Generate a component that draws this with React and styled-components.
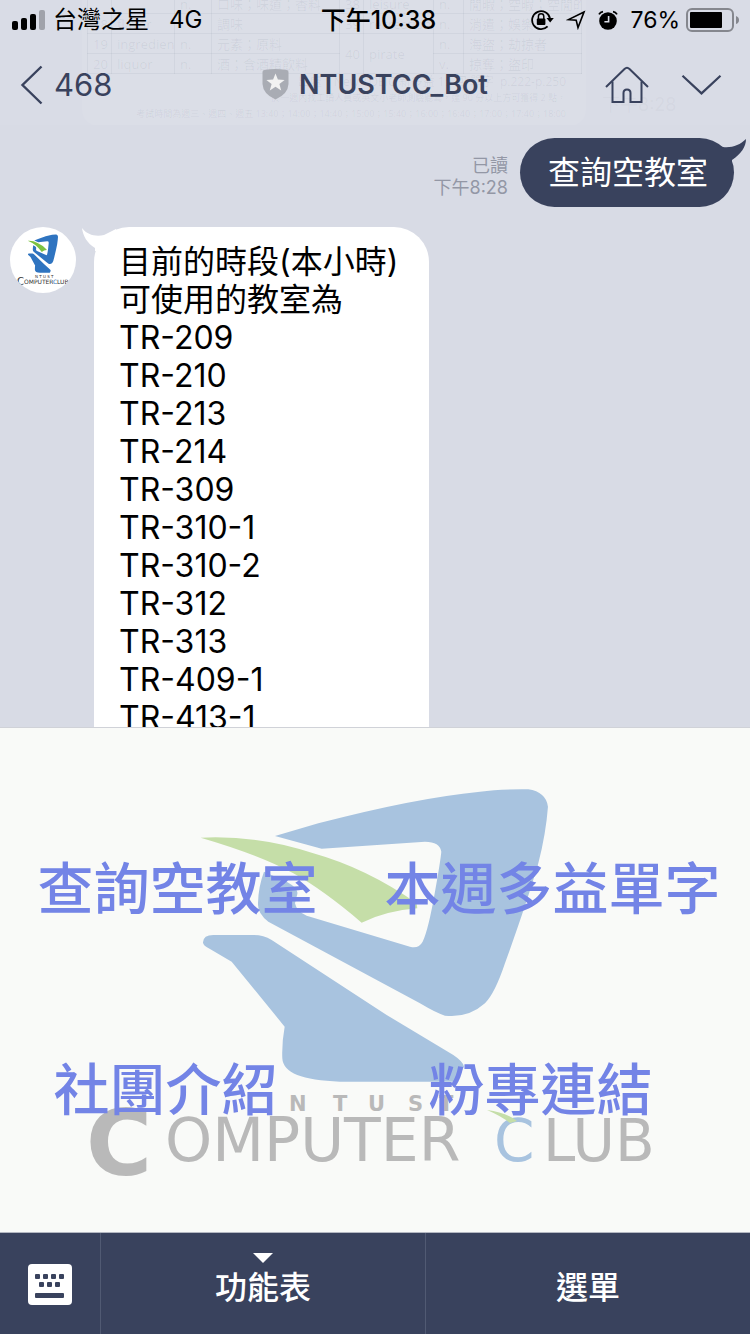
import React from "react";
import styled, { createGlobalStyle, css } from "styled-components";

const ink = "#39425d";
const sans = `Inter, "Noto Sans CJK TC", sans-serif`;

const GlobalStyle = createGlobalStyle`
  * { box-sizing: border-box; }
  body { margin: 0; background: #d8dbe5; font-family: ${sans}; }
  button { font: inherit; color: inherit; background: none; border: 0; padding: 0; margin: 0; cursor: pointer; }
  svg { display: block; flex: none; }
  h1, p { margin: 0; font-weight: inherit; }
`;

const Screen = styled.div`
  display: flex;
  flex-direction: column;
  height: 100vh;
  overflow: hidden;
`;

/* ---------- header ---------- */

const Header = styled.header`
  position: relative;
  flex: none;
  height: 125px;
  background: #d9dce6;
`;

const StatusBar = styled.div`
  position: relative;
  display: grid;
  grid-template-columns: 1fr auto 1fr;
  align-items: center;
  height: 40px;
  padding: 0 11px 0 12px;
  font-size: 24px;
  line-height: 40px;
  color: #000;
`;

const StatusGroup = styled.div`
  display: flex;
  align-items: center;
  gap: ${(p) => p.$gap}px;
  justify-content: ${(p) => (p.$end ? "flex-end" : "flex-start")};
`;

const Carrier = styled.span`
  margin-right: 12px;
`;

const Clock = styled.time`
  margin-left: 6px;
  font-size: 25px;
  font-weight: 500;
`;

const Percent = styled.span`
  font-size: 23px;
`;

const NavBar = styled.nav`
  position: relative;
  display: grid;
  grid-template-columns: 1fr auto 1fr;
  align-items: center;
  height: 85px;
  padding: 4px 28px 0;
  color: ${ink};
`;

const BackButton = styled.button`
  display: flex;
  align-items: center;
  gap: 10px;
  justify-self: start;
  margin-left: -8px;
  font-size: 31px;
`;

const Title = styled.h1`
  display: flex;
  align-items: center;
  gap: 10px;
  font-size: 27px;
  font-weight: 600;
`;

const NavActions = styled.div`
  display: flex;
  align-items: center;
  justify-content: flex-end;
  gap: 32px;
`;

/* ---------- scrolled message that shows faintly through the header ---------- */

const Underlay = styled.div`
  position: absolute;
  inset: 0;
  overflow: hidden;
  color: rgba(40, 50, 80, 0.07);
`;

const UnderCard = styled.div`
  position: absolute;
  left: 82px;
  top: -7px;
  width: 504px;
  padding: 0 5px 4px;
  border-radius: 0 0 16px 16px;
  background: rgba(255, 255, 255, 0.06);
  font-size: 13px;
  line-height: 16px;
`;

const UnderTable = styled.table`
  width: 100%;
  table-layout: fixed;
  border-collapse: collapse;
  font-family: "Open Sans", "Noto Sans CJK TC", sans-serif;
  td { height: 20px; padding: 0 5px; border: 1px solid rgba(40, 50, 80, 0.05); white-space: nowrap; overflow: hidden; }
`;

const UnderLine = styled.p`
  padding-right: 15px;
  text-align: right;
  white-space: nowrap;
  font-family: "Open Sans", "Noto Sans CJK TC", sans-serif;
  font-size: ${(p) => p.$size}px;
`;

const UnderTime = styled.span`
  position: absolute;
  left: 602px;
  top: 94px;
  font-size: 18px;
  line-height: 22px;
  opacity: 0.4;
`;

/* ---------- conversation ---------- */

const Chat = styled.main`
  flex: 1;
  min-height: 0;
  overflow: hidden;
  display: flex;
  flex-direction: column;
  gap: 20px;
  padding: 13px 16px 0 10px;
`;

const Row = styled.div`
  flex: none;
  display: flex;
  align-items: ${(p) => (p.$sent ? "flex-end" : "flex-start")};
  justify-content: ${(p) => (p.$sent ? "flex-end" : "flex-start")};
  gap: ${(p) => (p.$sent ? 12 : 18)}px;
`;

const Bubble = styled.div`
  position: relative;
  border-radius: 35px;
  font-size: 32px;
  line-height: 38px;
  ${(p) =>
    p.$sent
      ? css`
          padding: 16px 26px 15px 28px;
          color: #fff;
          background: ${ink};
        `
      : css`
          padding: 16px 31px 28px 25px;
          color: #000;
          background: #fff;
        `}
`;

const Tail = styled.svg`
  position: absolute;
  top: 0;
  ${(p) => (p.$sent ? "right: -12px;" : "left: -12px;")}
`;

const Meta = styled.div`
  padding-bottom: 8px;
  font-size: 18px;
  line-height: 22px;
  text-align: right;
  color: #9397a5;
`;

const Avatar = styled.div`
  flex: none;
  width: 66px;
  height: 66px;
  border-radius: 50%;
  overflow: hidden;
  background: #fff;
`;

/* ---------- rich menu ---------- */

const RichMenu = styled.section`
  position: relative;
  flex: none;
  background: #f9faf8;
  border-top: 1px solid #d0d2d8;
`;

const MenuArt = styled.svg`
  position: absolute;
  inset: 0;
  width: 100%;
  height: 100%;
`;

const MenuGrid = styled.div`
  position: relative;
  display: grid;
  grid-template-columns: 355fr 395fr;
  grid-auto-rows: 201px;
  padding: 60px 0 42px;
`;

const MenuItem = styled.button`
  padding-right: ${(p) => (p.$lower ? 24 : 0)}px;
  font-size: 56px;
  font-weight: 500;
  line-height: 64px;
  color: #7384e6;
  white-space: nowrap;
`;

/* ---------- bottom bar ---------- */

const BottomBar = styled.footer`
  flex: none;
  display: grid;
  grid-template-columns: 100px 1fr 1fr;
  height: 102px;
  border-top: 1px solid #b4b8c2;
  background: ${ink};
  color: #fff;
`;

const BarButton = styled.button`
  position: relative;
  display: flex;
  align-items: center;
  justify-content: center;
  padding-top: 2px;
  font-size: 32px;
  font-weight: 500;
  & + & { border-left: 1px solid #515a73; }
`;

const OpenMark = styled.svg`
  position: absolute;
  top: 20px;
  left: 50%;
  margin-left: -10px;
`;

/* ---------- drawings ---------- */

const ClubMark = ({ blue, green, transform }) => (
  <g transform={transform}>
    <path
      fill={blue}
      d="M285 198 L415 160 Q700 85 900 65 Q960 57 1045 58 Q1098 66 1104 110 Q1098 190 1075 280 Q1040 400 975 580 Q945 670 915 700 Q865 745 795 737 Q770 730 720 700 L265 455 Q232 430 234 400 Q235 350 252 305 L320 335 Q356 355 352 372 L345 400 Q350 425 380 437 L690 530 Q715 538 728 515 Q745 480 765 365 Q782 270 784 245 Q780 215 735 215 L425 236 Z"
    />
    <path
      fill={green}
      d="M62 203 Q240 195 400 250 Q560 295 710 400 L712 415 Q620 422 545 458 Q430 360 340 310 Q240 255 62 203Z"
    />
    <path
      fill={blue}
      d="M69 517 Q70 495 100 495 H220 Q250 495 275 510 L620 735 L820 855 Q850 875 852 890 Q835 925 820 935 H480 Q310 930 307 865 Q305 820 314 770 L155 575 L90 537 Q68 527 69 517Z"
    />
  </g>
);

const AvatarLogo = () => (
  <svg width="66" height="66" viewBox="0 0 66 66" role="img" aria-label="NTUST Computer Club">
    <ClubMark blue="#2f74c0" green="#7cc242" transform="translate(16 5) scale(0.029 0.0435)" />
    <g fontFamily='"DejaVu Sans", sans-serif' fill="#333">
      <text x="25" y="51" fontSize="4">N T U S T</text>
      <text x="7" y="58" fontSize="10">C</text>
      <text x="14" y="57" fontSize="6">OMPUTER</text>
      <text x="43" y="57" fontSize="6" fill="#2f74c0">C</text>
      <text x="47" y="57" fontSize="6">LUB</text>
    </g>
  </svg>
);

const Signal = () => (
  <svg width="33" height="20" viewBox="0 0 33 20" aria-hidden="true">
    <rect x="0" y="11" width="6" height="9" rx="2" />
    <rect x="9" y="8" width="6" height="12" rx="2" />
    <rect x="18" y="4" width="6" height="16" rx="2" />
    <rect x="27" y="0" width="6" height="20" rx="2" fill="#a0a2aa" />
  </svg>
);

const RotationLock = () => (
  <svg width="23" height="22" viewBox="0 0 23 22" aria-hidden="true">
    <path d="M16.6 17.4 A9 9 0 1 1 19 9.5" fill="none" stroke="#000" strokeWidth="1.8" />
    <path d="M15.5 9 H22.8 L19.2 13.5Z" />
    <rect x="5.8" y="9.5" width="8.6" height="6.5" rx="1" />
    <path d="M7.4 10 V7.5 a2.7 2.7 0 0 1 5.4 0 V10" fill="none" stroke="#000" strokeWidth="1.5" />
  </svg>
);

const LocationArrow = () => (
  <svg width="20" height="20" viewBox="0 0 20 20" aria-hidden="true">
    <path d="M18 2 L2.5 9.6 L10.2 10.2 L12 17.6Z" fill="none" stroke="#000" strokeWidth="1.6" strokeLinejoin="miter" />
  </svg>
);

const Alarm = () => (
  <svg width="20" height="20" viewBox="0 0 20 20" aria-hidden="true">
    <circle cx="10" cy="11" r="8.8" />
    <path d="M1 4.4 Q2.4 2 5 1.6 M19 4.4 Q17.6 2 15 1.6" fill="none" stroke="#000" strokeWidth="1.8" />
    <path d="M10.6 6 V11.8 H6.4" fill="none" stroke="#d9dce6" strokeWidth="1.6" />
  </svg>
);

const Battery = () => (
  <svg width="53" height="24" viewBox="0 0 53 24" aria-hidden="true">
    <rect x="1" y="1" width="46" height="22" rx="5" fill="none" stroke="#85878e" strokeWidth="2" />
    <rect x="4" y="4" width="32" height="16" rx="1" />
    <path d="M50 8 Q53 9 53 12 Q53 15 50 16Z" fill="#85878e" />
  </svg>
);

const underRows = [
  ["", "", "n.", "口味；味道；香料", "38", "leisure", "n.", "閒暇；空暇；空閒的"],
  ["18", "flavor", "", "調味", "39", "recreation", "n.", "消遣；娛樂"],
  ["19", "ingredient", "n.", "元素；原料", "40", "pirate", "n.", "海盜；劫掠者"],
  ["20", "liquor", "n.", "酒；含酒精飲料", null, null, "v.", "掠奪；盜印"],
];

const ScrolledMessage = () => (
  <Underlay aria-hidden="true">
    <UnderCard>
      <UnderTable>
        <colgroup>
          {[24, 63, 37, 128, 24, 70, 30, 118].map((w, i) => (
            <col key={i} width={w} />
          ))}
        </colgroup>
        <tbody>
          {underRows.map((cells, r) => (
            <tr key={r}>
              {cells.map((c, i) =>
                c === null ? null : (
                  <td key={i} rowSpan={c === "40" || c === "pirate" ? 2 : 1}>{c}</td>
                )
              )}
            </tr>
          ))}
        </tbody>
      </UnderTable>
      <UnderLine $size={12}>出處：New TOEIC 新多益 15 回 單字&nbsp; p.222-p.250</UnderLine>
      <UnderLine $size={9}>於一週內找工讀人員或英文小老師測驗聽寫，達 90 分以上方可獲得 2 點。</UnderLine>
      <UnderLine $size={9}>
        考試時間為週三、週四、週五 13:40；14:00；14:40；15:00；15:40；16:00；16:40；17:00；17:40；18:00
      </UnderLine>
    </UnderCard>
    <UnderTime>下午8:28</UnderTime>
  </Underlay>
);

const reply = [
  "目前的時段(本小時)",
  "可使用的教室為",
  "TR-209",
  "TR-210",
  "TR-213",
  "TR-214",
  "TR-309",
  "TR-310-1",
  "TR-310-2",
  "TR-312",
  "TR-313",
  "TR-409-1",
  "TR-413-1",
];

export default function App() {
  return (
    <Screen>
      <GlobalStyle />
      <Header>
        <ScrolledMessage />
        <StatusBar>
          <StatusGroup $gap={8}>
            <Signal />
            <Carrier>台灣之星</Carrier>
            <span>4G</span>
          </StatusGroup>
          <Clock>下午10:38</Clock>
          <StatusGroup $end $gap={12}>
            <RotationLock />
            <LocationArrow />
            <Alarm />
            <StatusGroup $gap={6}>
              <Percent>76%</Percent>
              <Battery />
            </StatusGroup>
          </StatusGroup>
        </StatusBar>
        <NavBar>
          <BackButton aria-label="返回 468">
            <svg width="24" height="40" viewBox="0 0 24 40" fill="none" stroke={ink} strokeWidth="2.4">
              <path d="M21.5 1.5 L2.5 20 L21.5 38.5" />
            </svg>
            468
          </BackButton>
          <Title>
            <svg width="27" height="31" viewBox="0 0 27 31" aria-hidden="true">
              <path fill="#a9acb4" d="M0.5 3 Q0.5 1 2.5 1 Q13 -1 24.5 1 Q26.5 1 26.5 3 V15 Q26 25 13.5 30.5 Q1 25 0.5 15Z" />
              <path fill="#f2f2f2" d="M13.5 4.4 L15.9 10.6 L22.6 10.9 L17.4 15 L19.2 21.5 L13.5 17.8 L7.8 21.5 L9.6 15 L4.4 10.9 L11.1 10.6Z" />
            </svg>
            NTUSTCC_Bot
          </Title>
          <NavActions>
            <button aria-label="主頁">
              <svg width="44" height="38" viewBox="0 0 44 38" fill="none" stroke={ink} strokeWidth="2">
                <path d="M1 21 L19.5 3 Q22 0.6 24.5 3 L43 21" />
                <path d="M7.5 15.5 V36 H18.5 V27 Q18.5 23.5 22 23.5 Q25.5 23.5 25.5 27 V36 H36.5 V15.5" />
              </svg>
            </button>
            <button aria-label="展開選單">
              <svg width="41" height="20" viewBox="0 0 41 20" fill="none" stroke={ink} strokeWidth="2.2">
                <path d="M1.5 0.8 L20.5 18.4 L39.5 0.8" />
              </svg>
            </button>
          </NavActions>
        </NavBar>
      </Header>

      <Chat>
        <Row $sent>
          <Meta>
            已讀
            <br />
            下午8:28
          </Meta>
          <Bubble $sent>
            <Tail $sent width="40" height="26" viewBox="0 0 40 26" aria-hidden="true">
              <path fill={ink} d="M40 1 C34 7 26 10 17 9 L0 4 V24 H26 V22 C35 16 40 9 40 1Z" />
            </Tail>
            查詢空教室
          </Bubble>
        </Row>
        <Row>
          <Avatar>
            <AvatarLogo />
          </Avatar>
          <Bubble>
            <Tail width="36" height="26" viewBox="0 0 36 26" aria-hidden="true">
              <path fill="#fff" d="M0 1 C5 8 14 10 22 8 L34 2 V24 H13 V21 C5 16 1 9 0 1Z" />
            </Tail>
            {reply.map((line) => (
              <p key={line}>{line}</p>
            ))}
          </Bubble>
        </Row>
      </Chat>

      <RichMenu>
        <MenuArt viewBox="0 0 750 504" role="img" aria-label="NTUST Computer Club">
          <ClubMark blue="#a8c3df" green="#c5dea8" transform="translate(180 42) scale(0.3333)" />
          <g fontFamily='"DejaVu Sans", sans-serif' fill="#b9b9b9">
            <text x="289 333 368 408 439" y="383" fontSize="21" fontWeight="700">NTUST</text>
            <text x="86" y="447" fontSize="90" fontWeight="700">C</text>
            <text x="165" y="433" fontSize="60">OMPUTER</text>
            <text x="494" y="433" fontSize="58" fill="#a8c3df">C</text>
            <text x="543" y="433" fontSize="58">LUB</text>
          </g>
          <path fill="#c5dea8" d="M487 382 Q505 384 517 393 L510 395 Q501 388 487 382Z" />
        </MenuArt>
        <MenuGrid>
          <MenuItem>查詢空教室</MenuItem>
          <MenuItem>本週多益單字</MenuItem>
          <MenuItem $lower>社團介紹</MenuItem>
          <MenuItem $lower>粉專連結</MenuItem>
        </MenuGrid>
      </RichMenu>

      <BottomBar>
        <BarButton aria-label="鍵盤">
          <svg width="44" height="42" viewBox="0 0 44 42">
            <rect width="44" height="41" rx="4" fill="#fff" />
            <g fill={ink}>
              {[7, 15, 23, 31].map((x) => (
                <rect key={x} x={x} y="10" width="5" height="5" rx="1" />
              ))}
              {[11, 19, 27].map((x) => (
                <rect key={x} x={x} y="18" width="5" height="5" rx="1" />
              ))}
              <rect x="7" y="29" width="29" height="5" rx="1" />
            </g>
          </svg>
        </BarButton>
        <BarButton>
          <OpenMark width="20" height="10" viewBox="0 0 20 10" aria-hidden="true">
            <path fill="#fff" d="M0 0 H20 L10 10Z" />
          </OpenMark>
          功能表
        </BarButton>
        <BarButton>選單</BarButton>
      </BottomBar>
    </Screen>
  );
}
